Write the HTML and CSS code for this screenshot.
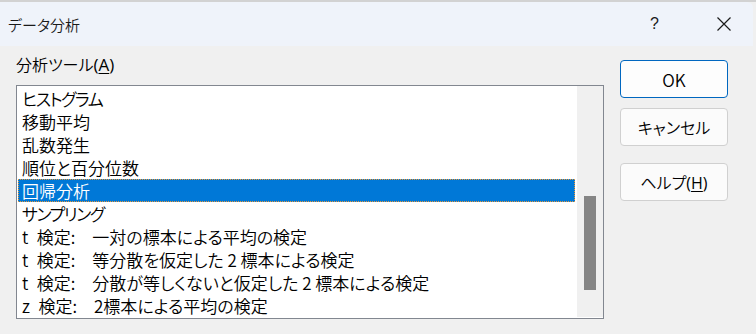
FILE: index.html
```html
<!DOCTYPE html>
<html lang="ja">
<head>
<meta charset="utf-8">
<link rel="stylesheet" href="styles.css">
</head>
<body>
<div class="window">
  <div class="titlebar">
    <span class="title">データ分析</span>
    <span class="help-q">?</span>
    <span class="close">
      <svg width="16" height="16" viewBox="0 0 16 16"><path d="M1.5 1.5 L14.5 14.5 M14.5 1.5 L1.5 14.5" stroke="#1b1b1b" stroke-width="1.2" fill="none"/></svg>
    </span>
  </div>
  <div class="content">
    <div class="left">
      <div class="label">分析ツール<span class="latin">(<u>A</u>)</span></div>
      <div class="listbox">
        <div class="items">
          <div class="item kana">ヒストグラム</div>
          <div class="item">移動平均</div>
          <div class="item">乱数発生</div>
          <div class="item">順位と百分位数</div>
          <div class="item selected">回帰分析</div>
          <div class="item kana">サンプリング</div>
          <div class="item">t&ensp;検定:&emsp;一対の標本による平均の検定</div>
          <div class="item">t&ensp;検定:&emsp;等分散を仮定した 2 標本による検定</div>
          <div class="item">t&ensp;検定:&emsp;分散が等しくないと仮定した 2 標本による検定</div>
          <div class="item">z&ensp;検定:&emsp;2標本による平均の検定</div>
        </div>
        <div class="scrollbar"><div class="thumb"></div></div>
      </div>
    </div>
    <div class="buttons">
      <button class="btn default">OK</button>
      <button class="btn">キャンセル</button>
      <button class="btn help">ヘルプ<span class="latin">(<u>H</u>)</span></button>
    </div>
  </div>
</div>
</body>
</html>
```
FILE: styles.css
```css
html, body {
  margin: 0;
  padding: 0;
}
body {
  width: 756px;
  height: 334px;
  overflow: hidden;
  background: #f0f0f0;
  font-family: "Noto Sans CJK JP", "Noto Sans", sans-serif;
  font-feature-settings: "palt";
  font-weight: 350;
  color: #000;
}
.window {
  border-top: 2px solid #d2d2d2;
  height: 332px;
  display: flex;
  flex-direction: column;
}
.titlebar {
  height: 44px;
  background: #eff3fa;
  display: flex;
  align-items: center;
  padding-left: 8px;
  border-top-right-radius: 6px;
  margin-right: 3px;
}
.title {
  flex: 1;
  font-size: 15px;
  color: #1a1a1a;
}
.help-q {
  font-family: "Liberation Sans", sans-serif;
  font-size: 16px;
  color: #1a1a1a;
  margin-right: 57px;
}
.close {
  display: flex;
  margin-right: 21px;
}
.content {
  display: flex;
  padding-left: 16px;
}
.left {
  display: flex;
  flex-direction: column;
}
.label {
  font-size: 16px;
  line-height: 20px;
  margin-top: 8px;
  margin-bottom: 10px;
}
.latin {
  font-family: "Open Sans", "Noto Sans", sans-serif;
  font-size: 17px;
  font-weight: 400;
}
.label u, .btn u {
  text-underline-offset: 2px;
}
.listbox {
  width: 586px;
  height: 232px;
  border: 1px solid #828790;
  background: #fff;
  display: flex;
}
.items {
  width: 558px;
  padding: 1px;
}
.item {
  height: 23px;
  line-height: 23px;
  font-size: 17px;
  padding-left: 4px;
  white-space: nowrap;
}
.item.kana {
  letter-spacing: -1.5px;
}
.item.selected {
  background: #0078d7;
  color: #fff;
  outline: 1px dotted #e8983a;
  outline-offset: -1px;
}
.scrollbar {
  margin-left: 1px;
  width: 26px;
  height: 231px;
  background: #f0f0f0;
  position: relative;
}
.thumb {
  position: absolute;
  left: 7px;
  top: 110px;
  width: 12px;
  height: 94px;
  background: #858585;
}
.buttons {
  display: flex;
  flex-direction: column;
  margin-left: 16px;
  margin-top: 14px;
}
.btn {
  width: 108px;
  height: 38px;
  border: 1px solid #d0d0d0;
  border-radius: 4px;
  background: #fbfbfb;
  font-family: "Noto Sans CJK JP", "Noto Sans", sans-serif;
  font-feature-settings: "palt";
  font-weight: 350;
  font-size: 16px;
  color: #000;
  padding: 0;
  margin-bottom: 10px;
}
.btn.default {
  border-color: #0067c0;
  background: #fdfdfd;
  font-size: 17px;
}
.btn.help {
  margin-top: 7px;
}
.btn .latin {
  font-size: 16px;
}
```
